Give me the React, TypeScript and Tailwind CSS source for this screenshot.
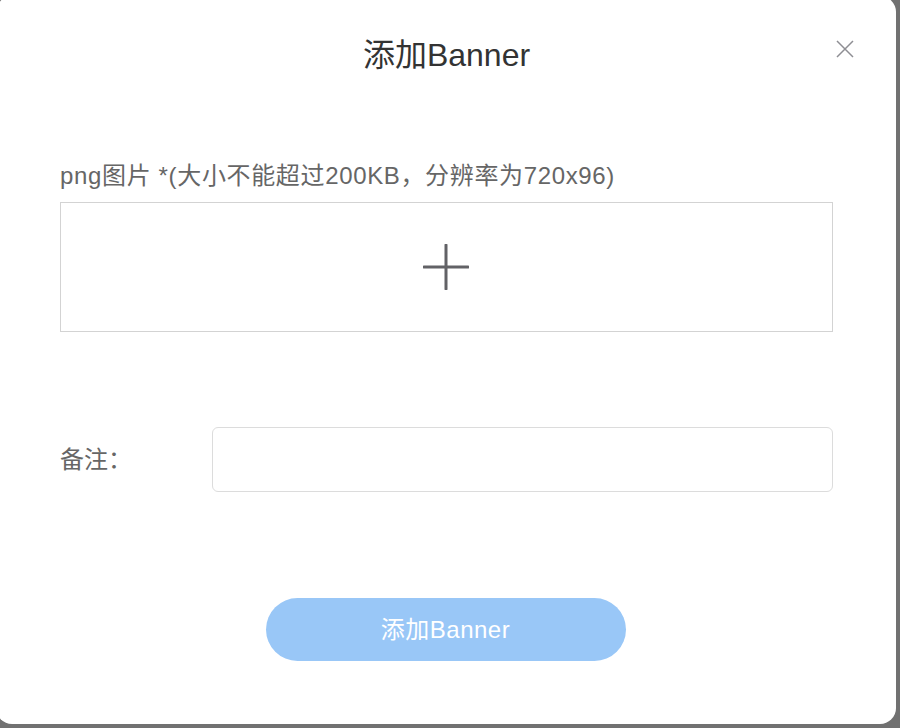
const AddBanner = () => {
    return (
        <div
            className="w-[900px] h-[728px] bg-[#717171] overflow-hidden"
            style={{ fontFamily: '"Liberation Sans", "Noto Sans CJK SC", sans-serif' }}
        >
            <div className="-ml-[4px] -mt-[4px] w-[900px] h-[728px] bg-white rounded-[16px] flex flex-col pl-[64px] pr-[63px]">
                <div className="relative mt-[41px] h-[36px] flex justify-center">
                    <h2 className="text-[32px] leading-[36px] text-[#333333]">添加Banner</h2>
                    <button className="absolute right-[-21px] top-[3px]">
                        <svg width="18" height="18" viewBox="0 0 18 18">
                            <path d="M1 1l16 16M17 1L1 17" stroke="#8e8e93" strokeWidth="1.5" />
                        </svg>
                    </button>
                </div>

                <label className="mt-[88px] h-[30px] text-[24px] leading-[30px] tracking-[0.65px] text-[#666666]">
                    png图片 *(大小不能超过200KB，分辨率为720x96)
                </label>
                <div className="mt-[11px] h-[130px] border border-[#d3d3d3] flex items-center justify-center">
                    <svg width="46" height="46" viewBox="0 0 46 46" className="-ml-[2px]">
                        <path d="M23 1v44M1 23h44" stroke="#626266" strokeWidth="3" strokeLinecap="round" />
                    </svg>
                </div>

                <div className="mt-[95px] flex items-center">
                    <span className="w-[152px] text-[24px] leading-[30px] text-[#666666]">备注：</span>
                    <input
                        type="text"
                        className="flex-1 h-[65px] border border-[#dcdcdc] rounded-[6px] px-4 text-[20px] outline-none"
                    />
                </div>

                <div className="mt-[106px] flex justify-center">
                    <button className="-ml-[2px] w-[360px] h-[63px] rounded-full bg-[#99c7f7] text-white text-[24px] tracking-[0.5px]">
                        添加Banner
                    </button>
                </div>
            </div>
        </div>
    );
};

export default AddBanner;
